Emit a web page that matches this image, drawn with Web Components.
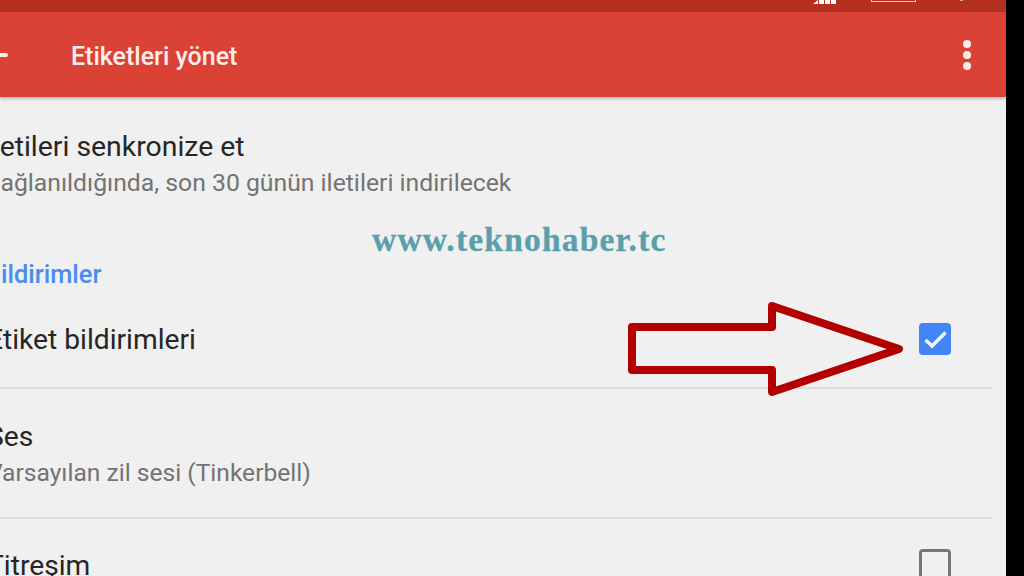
<!DOCTYPE html>
<html lang="tr"><head><meta charset="utf-8"><title>Etiketleri yönet</title>
<style>
html,body{margin:0;padding:0;background:#000;height:100%;overflow:hidden}
</style></head>
<body>
<app-screen>
  <status-bar slot="status"></status-bar>
  <app-toolbar slot="toolbar" title="Etiketleri yönet"></app-toolbar>
  <setting-row title="İletileri senkronize et" sub="Bağlanıldığında, son 30 günün iletileri indirilecek" kind="sync"></setting-row>
  <section-label>Bildirimler</section-label>
  <setting-row title="Etiket bildirimleri" kind="notify" checkbox="on" divider></setting-row>
  <setting-row title="Ses" sub="Varsayılan zil sesi (Tinkerbell)" kind="sound" divider></setting-row>
  <setting-row title="Titreşim" kind="vibrate" checkbox="off"></setting-row>
  <water-mark slot="over">www.teknohaber.tc</water-mark>
  <red-arrow slot="over"></red-arrow>
</app-screen>
<script>
function def(name, css, html, init){
  customElements.define(name, class extends HTMLElement{
    connectedCallback(){
      if(this.shadowRoot) return;
      const r=this.attachShadow({mode:'open'});
      r.innerHTML='<style>'+css+'</style>'+(typeof html==='function'?html(this):html);
      if(init) init(this,r);
    }
  });
}
const esc=s=>String(s==null?'':s).replace(/&/g,'&amp;').replace(/</g,'&lt;');
def('app-screen',`
 :host{display:flex;flex-direction:column;width:1006px;height:576px;background:#f0f0f0;position:relative;overflow:hidden;font-family:Roboto,"Liberation Sans",sans-serif}
 .list{display:flex;flex-direction:column;margin-left:-15px;margin-right:14px;padding-top:34px}
`,`<slot name="status"></slot><slot name="toolbar"></slot><div class="list"><slot></slot></div><slot name="over"></slot>`);
def('status-bar',`
 :host{display:flex;height:12px;background:#b5301f;flex:none;overflow:hidden;align-items:flex-start;padding-left:813px;box-sizing:border-box}
 .sig{display:flex;align-items:flex-end;gap:1px;height:4px;margin-right:31px;width:27px}
 .sig i{display:block;width:5px;height:4px;background:#fff}
 .sig i:first-child{width:5px;clip-path:polygon(100% 0,100% 100%,0 100%)}
 .bat{width:43px;height:1px;border:1px solid #f5d0c6;border-top:0;box-sizing:content-box;margin-right:44px}
 .dot{width:3px;height:1px;background:#e9a596}
`,`<div class="sig"><i></i><i></i><i></i><i></i></div><div class="bat"></div><div class="dot"></div>`);
def('app-toolbar',`
 :host{display:flex;align-items:center;height:85px;background:#db4236;flex:none;box-shadow:0 2px 3px rgba(0,0,0,.22);position:relative;z-index:1;color:#fbeeea;box-sizing:border-box;padding-top:1px}
 .back{width:8px;height:4px;background:#fbeeea;flex:none;margin-right:63px;border-radius:0 2px 2px 0}
 h1{margin:4px 0 0;font:500 25px/30px Roboto,sans-serif;flex:1}
 .more{display:flex;flex-direction:column;gap:3px;margin-right:35px}
 .more i{display:block;width:8px;height:8px;border-radius:50%;background:#fbeeea}
`,h=>`<div class="back"></div><h1>${esc(h.getAttribute('title'))}</h1><div class="more"><i></i><i></i><i></i></div>`);
def('section-label',`
 :host{display:block;font:500 25.4px/26px Roboto,sans-serif;color:#4a8cf0;margin-top:59px;margin-bottom:1px}
`,`<slot></slot>`);
def('setting-row',`
 :host{display:flex;align-items:center;box-sizing:border-box;color:#262626}
 :host([kind=sync]){height:71px;align-items:flex-start}
 :host([kind=notify]){height:101px}
 :host([kind=sound]){height:130px}
 :host([kind=vibrate]){height:60px;align-items:flex-start}
 :host([divider]){border-bottom:2px solid #dfdfdf}
 .t{flex:1;min-width:0}
 .a{font:400 28.4px/32px Roboto,sans-serif;white-space:nowrap}
 .b{font:400 24.75px/30px Roboto,sans-serif;color:#737373;white-space:nowrap;margin-top:5px}
 :host([kind=notify]) .t{padding:4px 0 0 2px}
 :host([kind=sound]) .t{padding:2px 0 0 2px}
 :host([kind=vibrate]) .t{padding:31px 0 0 2px}
 :host([kind=notify]) .a,:host([kind=sound]) .a,:host([kind=vibrate]) .a{font-size:28.2px}
 :host([kind=sound]) .b{font-size:24.6px}
 .box{box-sizing:border-box;width:32px;height:32px;border-radius:4px;flex:none;margin-right:41px;display:flex;align-items:center;justify-content:center}
 :host([kind=notify]) .box{margin-top:2px}
 :host([kind=vibrate]) .box{margin-top:30px}
 .on{background:#4285f4}
 .off{border:3px solid #757575}
 svg{width:24px;height:20px;display:block}
`,h=>{
  const c=h.getAttribute('checkbox');
  const s=h.getAttribute('sub');
  return `<div class="t"><div class="a">${esc(h.getAttribute('title'))}</div>${s?`<div class="b">${esc(s)}</div>`:''}</div>`+
  (c==='on'?`<div class="box on"><svg viewBox="0 0 24 20"><path d="M2.5 11 9 17 22.5 3.5" fill="none" stroke="#f2f6fe" stroke-width="3.5"/></svg></div>`:c==='off'?`<div class="box off"></div>`:'');
});
def('water-mark',`
 :host{position:absolute;left:372px;top:223px;font:700 33.5px/34px "Liberation Serif",serif;color:#5a9fab;letter-spacing:1.2px;white-space:nowrap;-webkit-text-stroke:.3px #5a9fab}
`,`<slot></slot>`);
def('red-arrow',`
 :host{position:absolute;left:620px;top:296px;width:290px;height:106px;display:block}
 svg{display:block;width:100%;height:100%}
`,`<svg viewBox="620 296 290 106"><path d="M632 327H772V306L899 349 772 392V370H632Z" fill="none" stroke="#b20000" stroke-width="8" stroke-linejoin="round"/></svg>`);
</script>
</body></html>
